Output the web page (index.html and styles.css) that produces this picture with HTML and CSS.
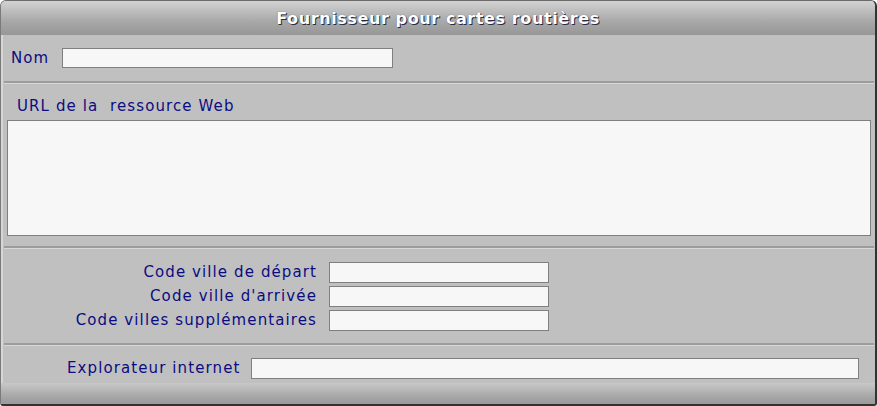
FILE: index.html
```html
<!DOCTYPE html>
<html lang="fr">
<head>
<meta charset="utf-8">
<title>Fournisseur pour cartes routières</title>
<link rel="stylesheet" href="styles.css">
</head>
<body>
<div class="window">
  <div class="titlebar">Fournisseur pour cartes routières</div>
  <div class="content">
    <div class="section sec-nom">
      <label class="lbl">Nom</label>
      <div class="field field-nom"></div>
    </div>
    <div class="sep"></div>
    <div class="section sec-url">
      <div class="lbl url-lbl">URL de la&nbsp; ressource Web</div>
      <div class="field area"></div>
    </div>
    <div class="sep"></div>
    <div class="section sec-codes">
      <div class="grid">
        <span class="lbl right">Code ville de départ</span><div class="field field-code"></div>
        <span class="lbl right">Code ville d'arrivée</span><div class="field field-code"></div>
        <span class="lbl right">Code villes supplémentaires</span><div class="field field-code"></div>
      </div>
    </div>
    <div class="sep"></div>
    <div class="section sec-exp">
      <span class="lbl">Explorateur internet</span>
      <div class="field field-exp"></div>
    </div>
    <div class="footer"></div>
  </div>
</div>
</body>
</html>
```
FILE: styles.css
```css
* { box-sizing: border-box; }
html, body { margin: 0; padding: 0; background: #ffffff; }
body { font-family: "DejaVu Sans", Verdana, sans-serif; }

.window {
  width: 877px;
  height: 406px;
  border-top: 1px solid #6a6a6a;
  border-left: 1px solid #7a7a7a;
  border-right: 2px solid #333333;
  border-bottom: 2px solid #333333;
  border-radius: 6px 6px 3px 3px;
  overflow: hidden;
  display: flex;
  flex-direction: column;
  background: #c0c0c0;
}

.titlebar {
  height: 34px;
  flex: none;
  background: linear-gradient(#d2d2d2, #a8a8a8 60%, #979797);
  color: #ffffff;
  font-weight: bold;
  font-size: 16px;
  letter-spacing: 0.6px;
  text-align: center;
  line-height: 36px;
  text-shadow: 1px 1px 0 #2a2a40, 0 0 1px #555;
}

.content {
  flex: 1;
  display: flex;
  flex-direction: column;
  border-left: 2px solid #d6d6d6;
  padding-left: 1px;
}

.lbl {
  color: #0c0c80;
  font-size: 15px;
  letter-spacing: 1.1px;
  white-space: pre;
}

.field {
  background: #f7f7f7;
  border: 1px solid #7f7f7f;
}

.section { flex: none; }

.sec-nom {
  height: 46px;
  display: flex;
  align-items: flex-start;
  padding-top: 13px;
  padding-left: 7px;
}
.sec-nom .lbl { width: 51px; line-height: 20px; }
.field-nom { width: 331px; height: 20px; }

.sep {
  flex: none;
  height: 3px;
  margin-right: 1px;
  border-top: 2px solid #9c9c9c;
  border-bottom: 1px solid #d8d8d8;
}

.sec-url {
  height: 162px;
  padding-top: 12px;
  padding-left: 3px;
  padding-right: 4px;
}
.url-lbl { padding-left: 10px; line-height: 20px; height: 24px; }
.area { height: 116px; }

.sec-codes {
  height: 94px;
  padding-top: 13px;
}
.grid {
  display: grid;
  grid-template-columns: 313px 220px;
  column-gap: 12px;
  row-gap: 3px;
}
.grid .right { text-align: right; line-height: 21px; }
.field-code { height: 21px; }

.sec-exp {
  height: 37px;
  display: flex;
  align-items: flex-start;
  padding-top: 12px;
  padding-left: 63px;
}
.sec-exp .lbl { width: 184px; line-height: 21px; }
.field-exp { width: 608px; height: 21px; }

.footer {
  flex: 1;
  margin-left: -3px;
  background: linear-gradient(#c8c8c8, #a4a4a4 70%, #9a9a9a);
}
```
